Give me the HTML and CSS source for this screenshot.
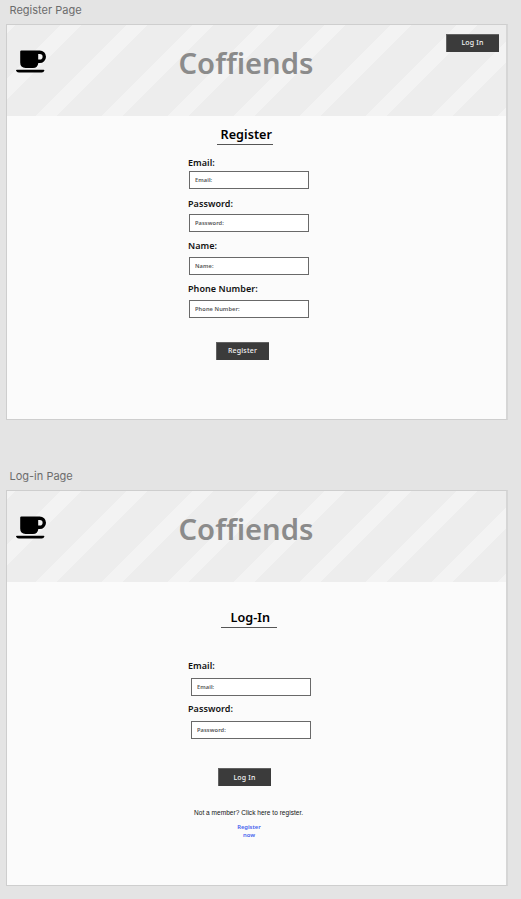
FILE: index.html
```html
<!DOCTYPE html>
<html lang="en">
<head>
<meta charset="utf-8">
<title>Coffiends</title>
<link rel="stylesheet" href="styles.css">
</head>
<body>
<svg class="symbols" aria-hidden="true">
  <symbol id="cup" viewBox="0 0 30 23">
    <path fill-rule="evenodd" d="M5.4.4H23.7A6.3 6.3 0 0 1 23.7 13H22.3Q21.8 18 17 18H9.6Q4.2 18 4.2 12.6V1.6Q4.2.4 5.4.4ZM22.2 4V9.6H23.8A2.8 2.8 0 0 0 23.8 4Z"/>
    <path d="M.8 19.7H27.6Q28.4 19.7 28.3 20.4Q27.9 22.5 25.8 22.5H2.8Q.6 22.5.1 20.5Q0 19.7.8 19.7Z"/>
  </symbol>
</svg>

<section class="artboard">
  <h2 class="caption">Register Page</h2>
  <div class="frame">
    <header class="banner">
      <svg class="logo"><use href="#cup"/></svg>
      <h1 class="brand">Coffiends</h1>
      <button class="button">Log In</button>
    </header>
    <main class="register">
      <h3 class="title">Register</h3>
      <form class="form">
        <div class="field first"><label>Email:</label><input placeholder="Email:"></div>
        <div class="field"><label>Password:</label><input placeholder="Password:"></div>
        <div class="field roomy"><label>Name:</label><input placeholder="Name:"></div>
        <div class="field roomy"><label>Phone Number:</label><input placeholder="Phone Number:"></div>
      </form>
      <button class="button submit">Register</button>
    </main>
  </div>
</section>

<section class="artboard">
  <h2 class="caption">Log-in Page</h2>
  <div class="frame">
    <header class="banner">
      <svg class="logo"><use href="#cup"/></svg>
      <h1 class="brand">Coffiends</h1>
    </header>
    <main class="login">
      <h3 class="title">Log-In</h3>
      <form class="form">
        <div class="field"><label>Email:</label><input placeholder="Email:"></div>
        <div class="field"><label>Password:</label><input placeholder="Password:"></div>
      </form>
      <button class="button submit">Log In</button>
      <p class="hint">Not a member? Click here to register.</p>
      <a class="link">Register<br>now</a>
    </main>
  </div>
</section>
</body>
</html>
```
FILE: styles.css
```css
* { box-sizing: border-box; margin: 0; padding: 0; }

body {
  background: #e4e4e4;
  color: #111;
  font-family: "Noto Sans", sans-serif;
  height: 899px;
  overflow: hidden;
}

.symbols { display: none; }

.artboard { padding-left: 6px; height: 466px; }

.caption {
  height: 24px;
  padding-left: 3.5px;
  color: #6c6c6c;
  font: 400 11px/21px Inter, sans-serif;
}

.frame {
  width: 502px;
  height: 396px;
  border: 1px solid #cecece;
  border-right: 2px solid #d6d6d6;
  background: #fbfbfb;
}

.banner {
  display: flex;
  align-items: flex-start;
  height: 91px;
  padding: 9px 7px 0 9px;
  background: repeating-linear-gradient(135deg,
    #f3f3f3 0 6.3px, #ededed 6.3px 37.6px, #f3f3f3 37.6px 46.67px);
}

.logo { width: 30px; height: 23px; margin-top: 16px; }

.brand {
  margin-left: 132.5px;
  color: #8b8b8b;
  font-size: 29.2px;
  font-weight: 600;
  line-height: 58px;
}

.button {
  display: block;
  width: 53px;
  height: 18px;
  padding-right: 1px;
  border: 1px solid #626262;
  border-width: 1px 0 0 1px;
  background: #3b3b3b;
  color: #f4f4f4;
  font: 500 7px/15px "Noto Sans", sans-serif;
  letter-spacing: 0.18px;
  text-align: center;
}

.banner .button { margin-left: auto; }
.banner .button, .register .button { padding-bottom: 2px; }

.title {
  display: flex;
  width: 56px;
  height: 20px;
  border-bottom: 1px solid #555;
  color: #000;
  font-size: 12.6px;
  font-weight: 600;
  letter-spacing: 0.05px;
  line-height: 19px;
  white-space: nowrap;
}

.register .title { margin: 9px 0 0 209.5px; padding-right: 0.5px; justify-content: flex-end; }
.login .title { margin: 26px 0 0 214px; padding-left: 2.5px; justify-content: center; }

.form { width: 124px; margin-left: 181px; }

.field { display: flex; flex-direction: column; gap: 3px; margin-bottom: 8px; }
.field.first { gap: 1px; }
.field.roomy { gap: 4px; margin-bottom: 7px; }
.register .field:nth-child(2) { margin-bottom: 7px; }

.field label {
  height: 14px;
  font-size: 9px;
  font-weight: 600;
  letter-spacing: 0.06px;
  line-height: 14px;
}

.field input {
  width: 120px;
  height: 18px;
  margin-left: 1px;
  padding: 0 5px;
  border: 1px solid #696969;
  background: #fff;
  font: 600 5.7px/16px "Noto Sans", sans-serif;
  letter-spacing: 0.08px;
}

.field input::placeholder { color: #555; opacity: 1; }

.register .form { margin-top: 11px; }
.register .submit { margin: 24px 0 0 209px; }

.login .form { margin-top: 31px; }
.login .field { gap: 5px; margin-bottom: 6px; }
.login .field input { margin-left: 3px; }
.login .submit { margin: 29px 0 0 211px; }

.hint {
  margin: 22px 0 0 187px;
  font: 6.5px/9px "Liberation Sans", sans-serif;
  letter-spacing: 0.04px;
}

.link {
  display: block;
  width: 50px;
  margin: 6px 0 0 217px;
  color: #4560ee;
  font-size: 5.8px;
  font-weight: 600;
  line-height: 8px;
  text-align: center;
}
```
